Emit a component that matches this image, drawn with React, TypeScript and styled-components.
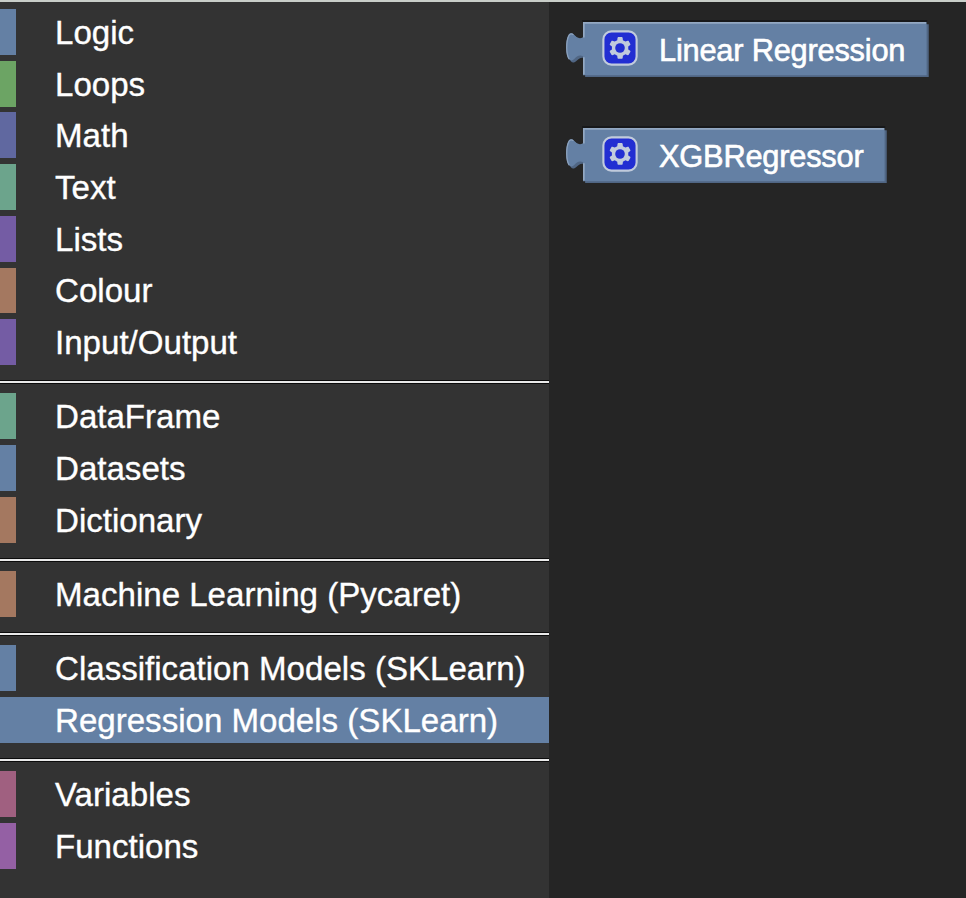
import React from "react";
import styled, { createGlobalStyle } from "styled-components";

const GlobalStyle = createGlobalStyle`
  * { box-sizing: border-box; }
  body {
    margin: 0;
    background: #252525;
    font-family: "Liberation Sans", Arial, Helvetica, sans-serif;
    color: #fff;
  }
`;

const Page = styled.main`
  display: flex;
  height: 898px;
  overflow: hidden;
  border-top: 2px solid #c9cec9;
  border-image: linear-gradient(#c9cec9 50%, #060606 50%) 2;
`;

const Toolbox = styled.nav`
  width: 549px;
  flex: none;
  padding-top: 7.1px;
  background: #333;
`;

const Category = styled.div<{ $color: string; $selected?: boolean }>`
  display: flex;
  align-items: center;
  height: 45.9px;
  margin-bottom: 5.8px;
  padding-left: 39px;
  border-left: 16px solid ${(p) => p.$color};
  background: ${(p) => (p.$selected ? p.$color : "transparent")};
`;

const Label = styled.span`
  padding-top: 2px;
  font-size: 33.1px;
  line-height: 46px;
  white-space: nowrap;
  -webkit-text-stroke: 0.35px #fff;
`;

const Separator = styled.hr`
  height: 4px;
  margin: 15.3px 0 9px;
  border: 1px solid #0c0c0c;
  border-width: 1px 0;
  background: #e9e9e9;
`;

const Flyout = styled.section`
  flex: 1;
  display: flex;
  flex-direction: column;
  gap: 49px;
  padding: 18px 0 0 15px;
  background: #252525;
`;

const BlockRoot = styled.div<{ $width: number }>`
  display: grid;
  width: ${(p) => p.$width}px;
  height: 57px;
  > * { grid-area: 1 / 1; }
`;

const BlockContent = styled.div`
  display: flex;
  align-items: center;
  gap: 20px;
  padding-left: 37px;
  height: 57px;
  z-index: 1;
`;

const GearSvg = styled.svg`
  flex: none;
  margin-bottom: 1px;
`;

const BlockLabel = styled.span`
  font-size: 30.8px;
  letter-spacing: -0.22px;
  line-height: 56px;
  padding-top: 4px;
  white-space: nowrap;
  -webkit-text-stroke: 0.6px #fff;
`;

const SCALE = 2.13;

function BlockShape({ width }: { width: number }) {
  const w = (width - 21.4) / SCALE;
  const outline = `M0,0 H${w} V25 H0 V16 C-2,15.3 -3,16.2 -4,17.2 C-5,18.2 -6,18.3 -6.7,17.4 C-8.2,15.3 -8.2,9 -6.9,6.3 C-6.3,5 -5.2,5 -4.3,5.9 C-3.2,7 -2,8.3 0,7.2 z`;
  return (
    <svg width={width} height="57" viewBox={`0 0 ${width} 57`}>
      <g transform={`translate(19 2) scale(${SCALE})`}>
        <path d={`M-.4,-.45 H${w + 0.3}`} stroke="#0b0d10" strokeWidth=".5" />
        <path d={outline} fill="#506684" transform="translate(1 1)" />
        <path d={outline} fill="#6480a4" />
        <path
          d={`M.4,24.7 V16.5 M.4,7.3 V.4 H${w - 0.3}`}
          fill="none"
          stroke="#93a8c2"
          strokeWidth=".8"
        />
        <path
          d="M-6.5,17.4 C-8,15.3 -8,9 -6.7,6.5 C-6.2,5.4 -5.3,5.4 -4.5,6"
          fill="none"
          stroke="#8ca2be"
          strokeWidth=".6"
        />
      </g>
    </svg>
  );
}

function Gear() {
  return (
    <GearSvg width="38" height="38" viewBox="-.92 -.92 17.84 17.84">
      <rect width="15.6" height="15.6" x=".2" y=".2" rx="3.8" fill="#222ed2" stroke="#c1cbdc" />
      <path
        fill="#c1cbdc"
        d="m4.203,7.296 0,1.368 -0.92,0.677 -0.11,0.41 0.9,1.559 0.41,0.11 1.043,-0.457 1.187,0.683 0.127,1.134 0.3,0.3 1.8,0 0.3,-0.299 0.127,-1.138 1.185,-0.682 1.046,0.458 0.409,-0.11 0.9,-1.559 -0.11,-0.41 -0.92,-0.677 0,-1.366 0.92,-0.677 0.11,-0.41 -0.9,-1.559 -0.409,-0.109 -1.046,0.458 -1.185,-0.682 -0.127,-1.138 -0.3,-0.299 -1.8,0 -0.3,0.3 -0.126,1.135 -1.187,0.682 -1.043,-0.457 -0.41,0.11 -0.899,1.559 0.108,0.409z"
      />
      <circle cx="8" cy="8" r="2.25" fill="#222ed2" />
    </GearSvg>
  );
}

function Block({ label, width }: { label: string; width: number }) {
  return (
    <BlockRoot $width={width}>
      <BlockShape width={width} />
      <BlockContent>
        <Gear />
        <BlockLabel>{label}</BlockLabel>
      </BlockContent>
    </BlockRoot>
  );
}

type Item = { name: string; color: string; selected?: boolean };

const groups: Item[][] = [
  [
    { name: "Logic", color: "#6480a4" },
    { name: "Loops", color: "#6ca464" },
    { name: "Math", color: "#6068a0" },
    { name: "Text", color: "#6ca48c" },
    { name: "Lists", color: "#745ca4" },
    { name: "Colour", color: "#a47860" },
    { name: "Input/Output", color: "#745ca4" },
  ],
  [
    { name: "DataFrame", color: "#6ca48c" },
    { name: "Datasets", color: "#6480a4" },
    { name: "Dictionary", color: "#a47860" },
  ],
  [{ name: "Machine Learning (Pycaret)", color: "#a47860" }],
  [
    { name: "Classification Models (SKLearn)", color: "#6480a4" },
    { name: "Regression Models (SKLearn)", color: "#6480a4", selected: true },
  ],
  [
    { name: "Variables", color: "#a06080" },
    { name: "Functions", color: "#9460a4" },
  ],
];

export default function App() {
  return (
    <>
      <GlobalStyle />
      <Page>
        <Toolbox>
          {groups.map((items, index) => (
            <React.Fragment key={index}>
              {index > 0 && <Separator />}
              {items.map((item) => (
                <Category key={item.name} $color={item.color} $selected={item.selected}>
                  <Label>{item.name}</Label>
                </Category>
              ))}
            </React.Fragment>
          ))}
        </Toolbox>
        <Flyout>
          <Block label="Linear Regression" width={365} />
          <Block label="XGBRegressor" width={323} />
        </Flyout>
      </Page>
    </>
  );
}
